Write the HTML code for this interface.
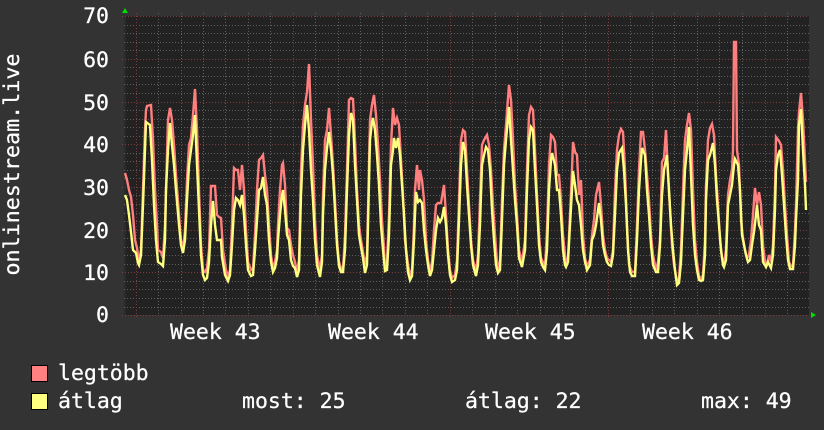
<!DOCTYPE html>
<html lang="hu">
<head>
<meta charset="utf-8">
<title>onlinestream.live</title>
<style>
html,body{margin:0;padding:0;background:#333;width:824px;height:430px;overflow:hidden}
svg{display:block}
text{font-family:"DejaVu Sans Mono","Liberation Mono",monospace;font-size:21.5px;fill:#fff;stroke:#fff;stroke-width:.25px}
</style>
</head>
<body>
<svg xmlns="http://www.w3.org/2000/svg" width="824" height="430" viewBox="0 0 824 430">
<rect width="824" height="430" fill="#333"/>
<rect x="124" y="16" width="685" height="299" fill="#222"/>
<rect x="124" y="16" width="2" height="299" fill="#2a2a2a"/>
<g fill="none" stroke-width="1" shape-rendering="crispEdges">
<path stroke="#606060" stroke-dasharray="1 2" d="M158.5 13V315M181.5 13V315M203.5 13V315M225.5 13V315M248.5 13V315M270.5 13V315M315.5 13V315M338.5 13V315M360.5 13V315M382.5 13V315M405.5 13V315M427.5 13V315M472.5 13V315M495.5 13V315M517.5 13V315M540.5 13V315M562.5 13V315M585.5 13V315M630.5 13V315M652.5 13V315M674.5 13V315M697.5 13V315M719.5 13V315M742.5 13V315M787.5 13V315"/>
<path stroke="#606060" stroke-dasharray="1 2" d="M124 307.5H809M124 298.5H809M124 289.5H809M124 281.5H809M124 264.5H809M124 255.5H809M124 247.5H809M124 238.5H809M124 221.5H809M124 213.5H809M124 204.5H809M124 195.5H809M124 178.5H809M124 170.5H809M124 161.5H809M124 153.5H809M124 136.5H809M124 127.5H809M124 119.5H809M124 110.5H809M124 93.5H809M124 84.5H809M124 76.5H809M124 67.5H809M124 50.5H809M124 42.5H809M124 33.5H809M124 25.5H809"/>
<path stroke="#803c3c" stroke-dasharray="1 2" d="M136.5 13V318M293.5 13V318M450.5 13V318M608.5 13V318M765.5 13V318"/>
<path stroke="#803c3c" stroke-dasharray="1 2" d="M122 16.5H809M122 59.5H809M122 102.5H809M122 144.5H809M122 187.5H809M122 230.5H809M122 272.5H809M122 315.5H809"/>
</g>
<polyline fill="none" stroke="#ff7f7f" stroke-width="2.4" stroke-linejoin="miter" points="125,173 127,180 129,190 131,197 133,215 135,240 137,248 139,262 141,250 143,190 145,130 146,110 147,106 151,105 153,140 155,190 157,225 158,250 161,252 163,258 165,225 167,155 168,120 170,108 172,120 174,145 176,175 179,215 181,240 183,250 185,230 187,180 189,145 191,138 193,115 195,89 197,130 199,190 201,245 203,270 205,272 207,268 209,250 211,186 213,186 215,186 217,215 219,217 221,218 223,250 226,270 228,277 230,270 232,225 234,168 236,170 238,170 240,190 242,165 244,190 246,230 248,262 251,270 253,268 255,235 257,190 259,160 261,158 263,155 265,175 267,190 269,225 271,255 273,268 275,262 277,250 278,225 280,190 282,165 283,163 285,185 287,228 289,230 291,245 293,255 295,262 297,272 299,260 301,170 303,125 305,105 307,92 309,64 311,120 313,165 315,220 317,255 320,270 322,255 323,195 325,140 327,130 329,108 331,135 333,165 335,200 337,240 339,262 341,268 343,270 345,235 347,170 349,100 351,98 353,99 355,140 357,190 359,225 361,240 363,252 365,265 367,255 368,210 370,120 372,105 374,95 376,115 378,145 380,180 382,220 384,248 385,268 387,262 389,215 391,145 393,108 395,125 397,118 399,125 401,160 403,195 405,240 408,265 410,275 412,270 414,225 415,190 417,165 419,190 420,170 422,180 424,200 426,240 428,260 430,272 432,262 434,230 436,205 438,203 441,203 444,185 446,215 448,250 450,270 452,278 455,275 457,260 459,200 461,140 463,130 465,132 467,170 469,205 471,240 473,260 476,272 478,255 480,200 482,145 484,140 487,135 489,145 491,170 493,205 495,235 497,262 498,270 500,260 502,200 504,150 506,125 509,85 511,100 513,140 515,185 517,215 519,250 522,262 525,240 527,170 529,115 531,107 533,110 535,150 537,195 539,235 541,258 543,262 545,268 547,230 549,165 551,135 553,137 555,142 557,175 559,175 561,200 563,235 565,255 566,262 568,258 570,215 572,170 573,142 575,152 577,155 579,195 581,180 583,235 585,258 587,266 590,260 592,235 594,220 596,195 599,182 601,205 603,235 605,250 607,258 609,260 611,262 613,250 615,190 617,150 619,135 621,129 623,132 625,170 627,225 629,265 632,272 635,272 637,225 639,170 641,132 643,132 645,150 647,175 649,200 651,235 653,255 656,270 658,262 660,240 662,162 664,158 666,130 668,175 670,210 672,245 674,265 677,282 679,278 681,250 683,190 685,140 687,125 689,113 691,130 693,190 695,240 697,262 699,276 701,279 703,275 705,240 706,185 708,140 710,128 712,124 714,135 716,175 718,205 720,240 722,258 724,264 726,250 728,195 730,180 732,170 733,150 734,42 736,42 737,150 739,165 741,220 743,238 745,250 747,258 749,255 751,240 753,215 755,188 757,205 759,192 761,205 763,245 765,262 767,264 769,255 771,262 773,245 775,190 776,137 779,141 781,145 783,170 785,205 787,235 789,262 791,266 793,266 795,230 796,205 798,130 799,112 801,93 803,120 805,160 806,182"/>
<polyline fill="none" stroke="#ffff7f" stroke-width="2.4" stroke-linejoin="miter" points="125,195 127,200 129,215 131,232 133,250 136,253 138,263 139,265 141,255 143,205 145,150 146,122 150,125 152,160 154,205 156,240 158,262 161,264 163,266 165,240 166,190 168,150 170,123 172,145 174,165 176,190 179,225 181,245 183,253 185,240 187,200 189,165 191,150 193,135 195,115 197,165 199,210 201,255 203,275 205,280 207,278 209,262 211,225 213,201 215,225 217,240 219,240 221,240 222,257 225,275 228,281 230,275 232,245 234,210 236,198 238,200 240,205 242,195 244,215 246,245 248,270 251,276 253,275 255,250 257,220 259,190 261,188 263,177 265,195 267,205 269,240 271,262 273,272 275,268 277,258 278,240 280,215 282,195 283,190 285,210 287,235 289,240 291,260 293,266 295,268 297,277 299,270 301,195 303,150 305,125 307,105 309,130 311,170 313,200 315,240 317,265 320,277 322,262 323,215 325,170 327,148 329,132 331,150 333,175 335,210 337,245 339,266 341,272 343,272 345,250 347,190 349,135 351,113 353,120 355,165 357,200 359,235 361,247 363,258 365,273 367,265 368,225 370,140 372,122 373,118 375,130 377,155 379,185 381,225 383,250 385,271 387,270 389,235 391,165 393,150 394,138 396,148 398,138 400,155 402,185 404,215 406,250 408,272 410,280 412,276 414,240 415,215 416,192 418,202 420,200 422,203 424,230 426,250 428,265 430,276 432,270 434,250 436,230 438,218 440,222 442,218 444,207 446,225 448,255 450,275 452,282 455,280 457,270 459,220 461,165 463,142 465,150 467,185 469,215 471,245 473,265 476,276 478,265 480,225 482,165 484,155 486,147 488,150 490,170 492,210 494,240 496,265 498,273 500,270 502,220 504,165 506,140 509,107 511,140 513,170 515,200 517,225 519,258 522,267 525,250 527,190 529,140 531,127 533,130 535,170 537,205 539,245 541,262 543,267 545,270 547,250 549,190 551,160 552,153 555,165 557,190 559,190 561,215 563,250 565,265 566,267 568,262 570,225 572,190 573,171 575,185 577,200 579,205 581,225 583,250 585,262 587,270 590,265 592,240 594,235 596,225 599,203 601,220 603,245 605,255 607,262 609,265 611,266 613,255 615,215 617,170 619,153 622,148 624,170 626,205 628,250 630,272 632,276 635,276 637,240 639,190 641,160 642,148 645,155 647,190 649,215 651,245 653,265 656,272 658,272 660,245 662,195 664,170 667,155 669,190 671,225 673,250 675,270 677,285 679,283 681,262 683,215 685,170 687,150 689,127 691,175 693,225 695,255 697,270 699,280 701,281 703,280 705,255 706,200 708,160 710,155 713,143 715,165 717,200 719,225 721,250 723,265 724,267 726,260 728,205 730,195 732,185 734,165 735,159 738,165 740,190 742,235 744,245 746,255 748,262 750,260 752,245 754,232 756,215 757,205 759,225 761,230 763,262 766,267 768,262 771,268 773,255 775,210 776,170 778,155 780,150 782,175 784,205 786,235 788,260 790,269 793,269 795,245 796,220 798,180 799,125 801,109 803,150 805,185 806,210"/>
<path fill="#00e000" d="M125 8L128 13H122Z"/>
<path fill="#00e000" d="M811 312L816 315L811 318Z"/>
<g text-anchor="end">
<text x="109" y="23">70</text>
<text x="109" y="67">60</text>
<text x="109" y="110">50</text>
<text x="109" y="152">40</text>
<text x="109" y="195">30</text>
<text x="109" y="238">20</text>
<text x="109" y="280">10</text>
<text x="109" y="322">0</text>
</g>
<text transform="translate(19 275.5) rotate(-90)" style="font-size:21.7px">onlinestream.live</text>
<text x="170" y="339">Week 43</text>
<text x="328" y="339">Week 44</text>
<text x="485" y="339">Week 45</text>
<text x="642" y="339">Week 46</text>
<rect x="31.5" y="365.5" width="16" height="16" fill="#ff8080" stroke="#000"/>
<rect x="31.5" y="393.5" width="16" height="16" fill="#ffff80" stroke="#000"/>
<text x="58" y="380">legtöbb</text>
<text x="58" y="408">átlag</text>
<text x="242" y="408">most: 25</text>
<text x="465" y="408">átlag: 22</text>
<text x="701" y="408">max: 49</text>
</svg>
</body>
</html>
